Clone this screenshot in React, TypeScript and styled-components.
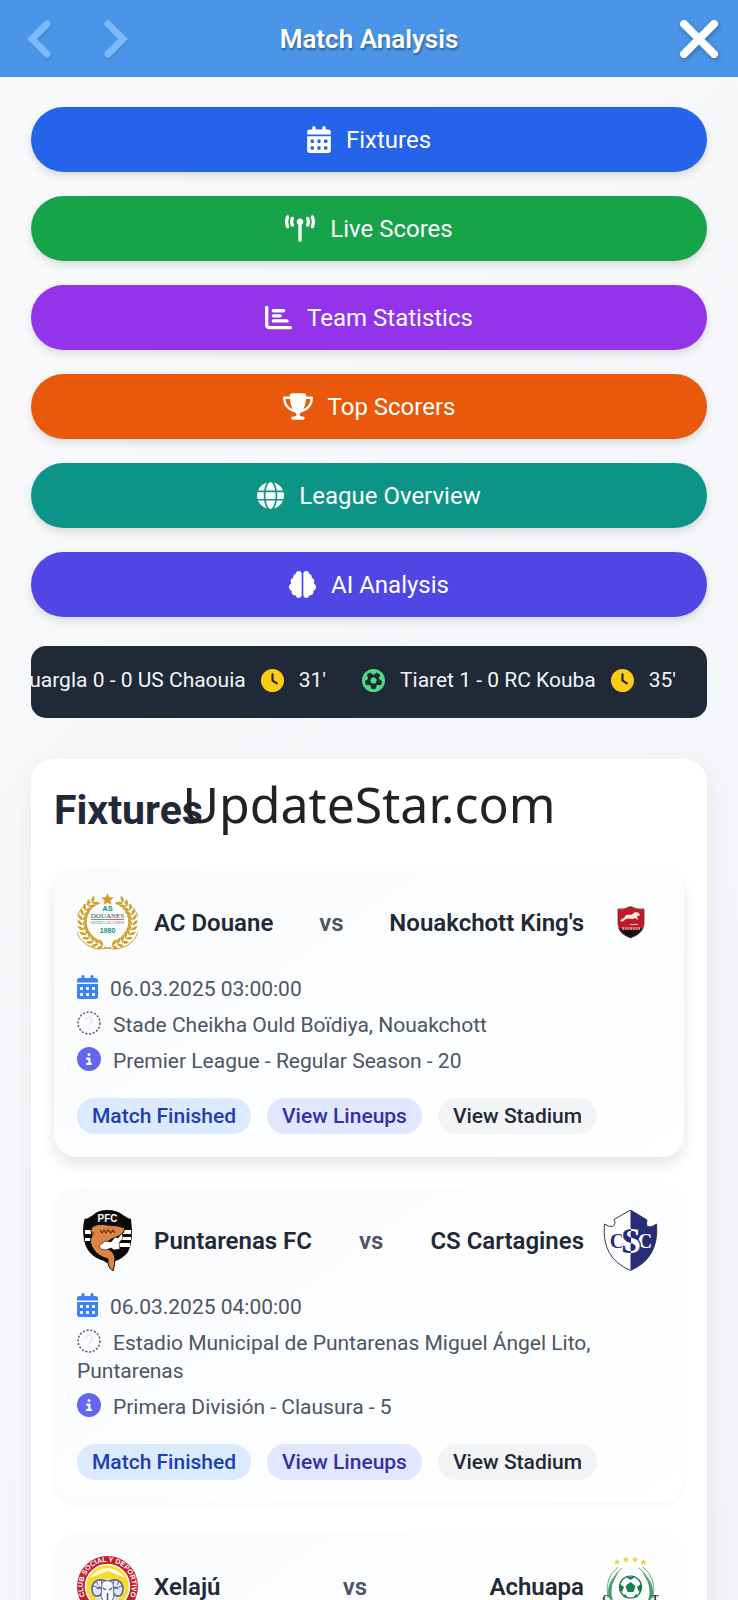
import React from "react";
import styled, { createGlobalStyle } from "styled-components";
import {
  FaBrain,
  FaCalendarDays,
  FaChartBar,
  FaCircleInfo,
  FaClock,
  FaFutbol,
  FaGlobe,
  FaTowerBroadcast,
  FaTrophy,
} from "react-icons/fa6";

const GlobalStyle = createGlobalStyle`
  *, *::before, *::after { box-sizing: border-box; }
  html { scrollbar-width: none; }
  body {
    margin: 0;
    font-family: Roboto, "Liberation Sans", sans-serif;
    color: #1f2937;
    background: #f5f7f9;
  }
  button { font-family: inherit; border: 0; cursor: pointer; }
  h1, h2, p { margin: 0; }
`;

const Page = styled.div`
  min-height: 100vh;
  background: linear-gradient(135deg, #f9fafc 0%, #f1f3f6 100%);
`;

const Header = styled.header`
  display: grid;
  grid-template-columns: 1fr auto 1fr;
  align-items: center;
  height: 77px;
  padding: 0 20px;
  background: #4a95e7;
`;

const HeaderNav = styled.nav`
  display: flex;
  gap: 40px;
`;

const ArrowButton = styled.button`
  display: flex;
  padding: 0;
  background: transparent;
  color: #7db8fc;
  filter: drop-shadow(1px 2px 1px rgba(0, 0, 0, 0.08));
`;

const CloseButton = styled.button`
  display: flex;
  justify-self: end;
  padding: 0;
  background: transparent;
  color: #fff;
  filter: drop-shadow(1px 2px 2px rgba(0, 0, 0, 0.25));
`;

const HeaderTitle = styled.h1`
  font-size: 26px;
  line-height: 32px;
  font-weight: 600;
  color: #fff;
  text-shadow: 1px 2px 2px rgba(0, 0, 0, 0.35);
`;

const Content = styled.main`
  display: flex;
  flex-direction: column;
  padding: 30px 31px;
`;

const TabList = styled.nav`
  display: flex;
  flex-direction: column;
  gap: 24px;
`;

const TabButton = styled.button<{ $color: string; $iconWidth: number }>`
  display: flex;
  align-items: center;
  justify-content: center;
  gap: 15px;
  height: 65px;
  border-radius: 33px;
  font-size: 24px;
  line-height: 36px;
  color: #fff;
  background: ${(p) => p.$color};
  box-shadow: 0 4px 8px rgba(0, 0, 0, 0.12);

  svg {
    flex: none;
    width: ${(p) => p.$iconWidth}px;
    height: 27px;
  }
`;

const Ticker = styled.div`
  display: flex;
  justify-content: flex-end;
  align-items: center;
  height: 72px;
  margin-top: 29px;
  padding: 0 31px 4px 0;
  overflow: hidden;
  white-space: nowrap;
  border-radius: 15px;
  font-size: 21px;
  line-height: 28px;
  color: #f3f4f6;
  background: #1f2937;
`;

const TickerItem = styled.span`
  display: flex;
  flex: none;
  align-items: center;
  gap: 15px;
  margin-left: 36px;
`;

const TickerIcon = styled.span<{ $color: string }>`
  display: flex;
  font-size: 23px;
  color: ${(p) => p.$color};
`;

const Panel = styled.section`
  margin-top: 41px;
  padding: 23px;
  border-radius: 23px;
  background: #fff;
  box-shadow: 0 8px 24px rgba(0, 0, 0, 0.06);
`;

const PanelTitle = styled.h2`
  font-size: 41px;
  line-height: 56px;
  font-weight: 700;
`;

const FixtureList = styled.div`
  display: flex;
  flex-direction: column;
  gap: 30px;
  margin-top: 31px;
`;

const Card = styled.article<{ $raised?: boolean }>`
  padding: 23px;
  border-radius: 23px;
  background: linear-gradient(145deg, #f9fbfd 0%, #ffffff 100%);
  box-shadow: ${(p) =>
    p.$raised ? "0 8px 15px rgba(0, 0, 0, 0.1)" : "0 2px 5px rgba(0, 0, 0, 0.04)"};
`;

const Teams = styled.div`
  display: flex;
  justify-content: space-between;
  align-items: center;
  height: 61px;
  font-size: 24px;
  line-height: 32px;
  font-weight: 600;
`;

const Team = styled.div`
  display: flex;
  align-items: center;
  gap: 16px;
`;

const Versus = styled.span`
  color: #4b5563;
`;

const Details = styled.div`
  display: flex;
  flex-direction: column;
  gap: 8px;
  margin-top: 22px;
  font-size: 21px;
  line-height: 28px;
  color: #4b5563;
`;

const DetailIcon = styled.span<{ $color: string; $width: number }>`
  display: inline-flex;
  margin-right: 12px;
  vertical-align: -3px;
  color: ${(p) => p.$color};

  svg {
    flex: none;
    width: ${(p) => p.$width}px;
    height: 24px;
  }
`;

const Chips = styled.div`
  display: flex;
  flex-wrap: wrap;
  gap: 16px;
  margin-top: 23px;
`;

const Chip = styled.button<{ $tone: "blue" | "indigo" | "gray" }>`
  height: 36px;
  padding: 0 15px;
  border-radius: 18px;
  font-size: 21px;
  line-height: 28px;
  font-weight: 500;
  color: ${(p) => ({ blue: "#1e40af", indigo: "#3730a3", gray: "#1f2937" })[p.$tone]};
  background: ${(p) => ({ blue: "#dbeafe", indigo: "#e0e7ff", gray: "#f3f4f6" })[p.$tone]};
`;

const Watermark = styled.div`
  position: fixed;
  top: 50%;
  left: 0;
  right: 0;
  margin-top: -30px;
  text-align: center;
  font-family: "Noto Sans", "Open Sans", sans-serif;
  font-size: 50px;
  line-height: 68px;
  color: #222;
  pointer-events: none;
`;

const MissingIcon = () => (
  <svg viewBox="0 0 23 23" aria-hidden="true">
    <circle cx="11.5" cy="11.5" r="10.5" fill="none" stroke="#555b66" strokeWidth="1.4" strokeDasharray="2 1.6" />
    <path d="M8.5 9a3 3 0 1 1 4.5 2.600q-1.500 1-1.500 2.400M11.500 16v1.500" fill="none" stroke="#e3e6ea" strokeWidth="1.3" />
  </svg>
);

const wreathLeaves = Array.from({ length: 12 }, (_, i) => 100 + i * 12);

const DouaneCrest = () => (
  <svg width="61" height="61" viewBox="0 0 61 61" aria-label="AC Douane">
    {[1, -1].map((side) => (
      <g key={side} transform={side === 1 ? undefined : "translate(61 0) scale(-1 1)"}>
        <path d="M14 10A25 24 0 0 0 34 55" fill="none" stroke="#c9a23a" strokeWidth="1" />
        {wreathLeaves.map((deg) => {
          const a = (deg * Math.PI) / 180;
          const x = 30.5 + 25 * Math.cos(a);
          const y = 30 + 24 * Math.sin(a);
          return (
            <g key={deg} transform={`translate(${x} ${y}) rotate(${deg})`} fill="#cfa02c">
              <path d="M0 0Q0 4 4.500 6 5 1 0 0z" />
              <path d="M0 0Q0 4-5 6.500-5.500 1 0 0z" />
            </g>
          );
        })}
      </g>
    ))}
    <path d="M30.500 1l1.800 4.200 4.500.3-3.500 2.900 1.200 4.400-4-2.400-4 2.400 1.200-4.400-3.500-2.900 4.500-.3z" fill="#d79a1e" />
    <g textAnchor="middle" fontFamily="Liberation Sans, sans-serif" fontWeight="700">
      <text x="30.500" y="19" fontSize="7.500" fill="#179077">AS</text>
      <text x="30.500" y="26" fontSize="7" fontFamily="Liberation Serif, serif" fontWeight="400" fill="#444">DOUANES</text>
      <text x="30.500" y="32" fontSize="4.600" fontFamily="Liberation Serif, serif" fontWeight="400" fill="#777">SENEGALAISES</text>
      <text x="30.500" y="41" fontSize="7" fill="#179077">1980</text>
    </g>
    <path d="M14 27.500h16" stroke="#3a9a80" strokeWidth=".9" />
    <path d="M30 27.500h17" stroke="#d05560" strokeWidth=".9" />
  </svg>
);

const KingsCrest = () => (
  <svg width="61" height="61" viewBox="0 0 61 61" aria-label="Nouakchott King's">
    <path d="M18 17q6 1 12.500-2.500Q37 18 44 17v15q-1 9-13.500 14Q19 41 18 32z" fill="#bd1c27" />
    <path d="M18.300 36q12 3 25 0-2.500 7-13 10-9.500-3-12-10z" fill="#161214" />
    <path d="M20 29q2-3 4-3l2-3 6-.5 3-2.500 4 1 1 2.500-3 .5 1 4-3-2-2 1-5-.5-3 1-2 2z" fill="#f7e9e6" />
    <path d="M30 32.500h8" stroke="#f0b8b0" strokeWidth="1" />
    <path d="M22 36.500h18" stroke="#d98079" strokeWidth="3" strokeDasharray="2 .7" />
    <path d="M18 17q6 1 12.500-2.500Q37 18 44 17v15q-1 9-13.500 14Q19 41 18 32z" fill="none" stroke="#6d3033" strokeWidth=".8" />
  </svg>
);

const PuntarenasCrest = () => (
  <svg width="61" height="61" viewBox="0 0 61 61" aria-label="Puntarenas FC">
    <path d="M30.500 0Q40 0 46 5q4 3 8 4 3 22-3 33-5 7-15 10-5 3-9-1Q10 46 7 30 5 18 7.500 9q5-1 8.500-4Q21 0 30.500 0z" fill="#0b0a0b" />
    <path d="M8 20h13v4H8zM41 20h13v4H41zM42 27h12v3H42zM40 33h13v4H40zM8 28h6v3H8z" fill="#fff" />
    <path d="M15 17q6-4 15-2 10 0 18 3-1 6-6 8-7 2-12 6-5 6 3 8 4 2 5 8 0 7-2 13-6-4-5-12-10-3-14-9-6-8-2-14-2-6 0-9z" fill="#dd8443" stroke="#0b0a0b" strokeWidth="1" />
    <path d="M22 36l6-5 6 1 4-5 3 1 4-5 1 5-4 5 1 6-6 1-3-2-5 2-5-1z" fill="#fff" stroke="#0b0a0b" strokeWidth=".6" />
    <path d="M23 20l2 3 2-3 2 3 2-3 3 3 2-3 2 3M16 22v3" fill="none" stroke="#5e351d" strokeWidth="1.2" />
    <text x="30.500" y="11.500" textAnchor="middle" fontFamily="Liberation Sans, sans-serif" fontWeight="700" fontSize="10" fill="#fff">PFC</text>
  </svg>
);

const CartaginesCrest = () => (
  <svg width="61" height="61" viewBox="0 0 61 61" aria-label="CS Cartagines">
    <defs>
      <linearGradient id="csc-fill" gradientUnits="userSpaceOnUse" x1="0" y1="0" x2="61" y2="0">
        <stop offset="50%" stopColor="#282c74" />
        <stop offset="50%" stopColor="#fff" />
      </linearGradient>
      <linearGradient id="csc-edge" gradientUnits="userSpaceOnUse" x1="0" y1="0" x2="61" y2="0">
        <stop offset="50%" stopColor="#fff" />
        <stop offset="50%" stopColor="#282c74" />
      </linearGradient>
    </defs>
    <path d="M30.500 0L47 10q-2 7 3 7 4-1 6.500-3 3 34-26 46.500Q1 48 4.500 14q4 3 8 2.500 4-2 1.500-7z" fill="#fff" stroke="#343a62" strokeWidth="1" />
    <path d="M30.500 0L47 10q-2 7 3 7 4-1 6.500-3 3 34-26 46.500z" fill="#282c74" />
    <g fontFamily="Liberation Serif, serif" fontWeight="700" textAnchor="middle" paintOrder="stroke" strokeWidth="2.500">
      <text x="17" y="38" fontSize="20" fill="#282c74">C</text>
      <text x="45" y="38" fontSize="20" fill="#fff">C</text>
      <text x="31" y="43" fontSize="36" fill="url(#csc-fill)" stroke="url(#csc-edge)">S</text>
    </g>
  </svg>
);

const XelajuCrest = () => (
  <svg width="61" height="61" viewBox="0 0 61 61" aria-label="Xelajú">
    <defs>
      <path id="xelaju-ring" d="M8.500 41A24.500 24.500 0 1 1 52.500 41" />
    </defs>
    <circle cx="30.500" cy="30.500" r="30.500" fill="#c3202f" />
    <circle cx="30.500" cy="30.500" r="22" fill="#f6dc2a" stroke="#fff" strokeWidth="1.500" />
    <path d="M12 22Q30 2 49 22l-18-7z" fill="#fffbe0" />
    <text fontFamily="Liberation Sans, sans-serif" fontWeight="700" fontSize="7" fill="#fff">
      <textPath href="#xelaju-ring" startOffset="50%" textAnchor="middle">CLUB SOCIAL Y DEPORTIVO</textPath>
    </text>
    <ellipse cx="30.500" cy="34" rx="17" ry="11" fill="#e9ebf4" />
    <g fill="none" stroke="#5965a5" strokeWidth="1.800">
      <path d="M29 25q-12-4-14 7 0 9 6 8 6-2 4-7-3-3-5 0" />
      <path d="M32 25q12-4 14 7 0 9-6 8-6-2-4-7 3-3 5 0" />
      <path d="M19 25l2 4M16 30l4 1M24 24l1 4M42 25l-2 4M45 30l-4 1M37 24l-1 4" strokeWidth="1" />
    </g>
    <path d="M25 27q5-5 11 0l1 14-6.500 12-6.500-12z" fill="#f8f8fb" stroke="#5965a5" strokeWidth="1" />
    <path d="M26 32l3 2M35 32l-3 2M30.500 37v8" stroke="#4b5797" strokeWidth="1.500" />
  </svg>
);

const starPath = "M0-3.200L1-1 3.200-1 1.500.600 2.200 3 0 1.600-2.200 3-1.500.600-3.200-1-1-1z";

const AchuapaCrest = () => (
  <svg width="61" height="61" viewBox="0 0 61 61" aria-label="Achuapa">
    {[[17, 6], [26, 3.5], [35, 3.5], [43.5, 6]].map(([x, y]) => (
      <path key={x} d={starPath} transform={`translate(${x} ${y})`} fill="#f0cf45" />
    ))}
    <path d="M19 16Q5 27 9 42l5 5q-7-15 5-31zM42 16q14 11 10 26l-5 5q7-15-5-31z" fill="#3f9c68" />
    <path d="M18 11Q4 22 8 42M22 12q-12 9-11 24M43 11q14 11 10 31M39 12q12 9 11 24" fill="none" stroke="#63a883" strokeWidth="1" />
    <circle cx="30.500" cy="31" r="11" fill="#fff" stroke="#23704a" strokeWidth="1.200" />
    <path d="M30.500 26l5 4-2 6h-6l-2-6zM26 21h9l-4.500 3zM20 28l4 3-2 5-3-2zM41 28l-4 3 2 5 3-2zM25 38l3 4-5-1zM36 38l-3 4 5-1z" fill="#16834a" />
    <g fontFamily="Liberation Serif, serif" fontWeight="700" fontSize="10" textAnchor="middle" fill="#26282b">
      <text x="6" y="46">C</text>
      <text x="55" y="46">T</text>
    </g>
  </svg>
);

const tabs = [
  { label: "Fixtures", color: "#2563eb", Icon: FaCalendarDays, iconWidth: 24 },
  { label: "Live Scores", color: "#16a34a", Icon: FaTowerBroadcast, iconWidth: 30 },
  { label: "Team Statistics", color: "#9333ea", Icon: FaChartBar, iconWidth: 27 },
  { label: "Top Scorers", color: "#ea580c", Icon: FaTrophy, iconWidth: 30 },
  { label: "League Overview", color: "#0d9488", Icon: FaGlobe, iconWidth: 27 },
  { label: "AI Analysis", color: "#4f46e5", Icon: FaBrain, iconWidth: 27 },
];

const liveScores = [
  { score: "Ouargla 0 - 0 US Chaouia", minute: "31'" },
  { score: "Tiaret 1 - 0 RC Kouba", minute: "35'" },
];

const fixtures = [
  {
    home: "AC Douane",
    away: "Nouakchott King's",
    HomeCrest: DouaneCrest,
    AwayCrest: KingsCrest,
    date: "06.03.2025 03:00:00",
    venue: "Stade Cheikha Ould Boïdiya, Nouakchott",
    league: "Premier League - Regular Season - 20",
    raised: true,
  },
  {
    home: "Puntarenas FC",
    away: "CS Cartagines",
    HomeCrest: PuntarenasCrest,
    AwayCrest: CartaginesCrest,
    date: "06.03.2025 04:00:00",
    venue: "Estadio Municipal de Puntarenas Miguel Ángel Lito, Puntarenas",
    league: "Primera División - Clausura - 5",
  },
  {
    home: "Xelajú",
    away: "Achuapa",
    HomeCrest: XelajuCrest,
    AwayCrest: AchuapaCrest,
  },
];

export default function App() {
  return (
    <Page>
      <GlobalStyle />
      <Header>
        <HeaderNav>
          <ArrowButton aria-label="Back">
            <svg width="36" height="42" viewBox="0 0 36 42" fill="none" stroke="currentColor" strokeWidth="7" strokeLinecap="round">
              <path d="M27 6L12 21l15 15" />
            </svg>
          </ArrowButton>
          <ArrowButton aria-label="Forward">
            <svg width="36" height="42" viewBox="0 0 36 42" fill="none" stroke="currentColor" strokeWidth="7" strokeLinecap="round">
              <path d="M12 6l15 15-15 15" />
            </svg>
          </ArrowButton>
        </HeaderNav>
        <HeaderTitle>Match Analysis</HeaderTitle>
        <CloseButton aria-label="Close">
          <svg width="38" height="38" viewBox="0 0 38 38" fill="none" stroke="currentColor" strokeWidth="8" strokeLinecap="round">
            <path d="M4 4l30 30M34 4L4 34" />
          </svg>
        </CloseButton>
      </Header>
      <Content>
        <TabList>
          {tabs.map(({ label, color, Icon, iconWidth }) => (
            <TabButton key={label} $color={color} $iconWidth={iconWidth}>
              <Icon />
              {label}
            </TabButton>
          ))}
        </TabList>
        <Ticker>
          {liveScores.map(({ score, minute }) => (
            <TickerItem key={score}>
              <TickerIcon $color="#4ade80"><FaFutbol /></TickerIcon>
              {score}
              <TickerIcon $color="#facc15"><FaClock /></TickerIcon>
              {minute}
            </TickerItem>
          ))}
        </Ticker>
        <Panel>
          <PanelTitle>Fixtures</PanelTitle>
          <FixtureList>
            {fixtures.map(({ home, away, HomeCrest, AwayCrest, date, venue, league, raised }) => (
              <Card key={home} $raised={raised}>
                <Teams>
                  <Team><HomeCrest />{home}</Team>
                  <Versus>vs</Versus>
                  <Team>{away}<AwayCrest /></Team>
                </Teams>
                {date && (
                  <>
                    <Details>
                      <p><DetailIcon $color="#3b82f6" $width={21}><FaCalendarDays /></DetailIcon>{date}</p>
                      <p><DetailIcon $color="#6b7280" $width={24}><MissingIcon /></DetailIcon>{venue}</p>
                      <p><DetailIcon $color="#6366f1" $width={24}><FaCircleInfo /></DetailIcon>{league}</p>
                    </Details>
                    <Chips>
                      <Chip $tone="blue">Match Finished</Chip>
                      <Chip $tone="indigo">View Lineups</Chip>
                      <Chip $tone="gray">View Stadium</Chip>
                    </Chips>
                  </>
                )}
              </Card>
            ))}
          </FixtureList>
        </Panel>
      </Content>
      <Watermark>UpdateStar.com</Watermark>
    </Page>
  );
}
